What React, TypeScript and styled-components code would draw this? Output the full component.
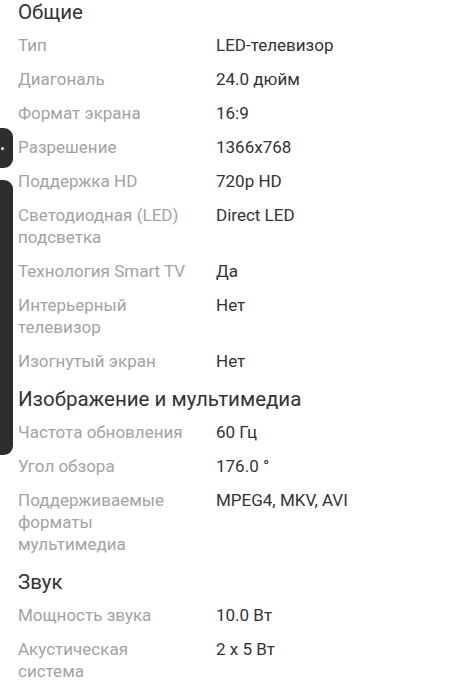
import React from "react";
import styled, { createGlobalStyle } from "styled-components";

const Global = createGlobalStyle`
  html, body { margin: 0; padding: 0; background: #ffffff; }
  body { font-family: Roboto, "Noto Sans", "Liberation Sans", sans-serif; -webkit-font-smoothing: antialiased; }
`;

const Page = styled.div`
  position: relative;
  width: 452px;
  min-height: 699px;
  padding: 0 18px;
  box-sizing: border-box;
  overflow: hidden;
`;

const Section = styled.section`
  display: flex;
  flex-direction: column;
`;

const Heading = styled.h2`
  margin: 3px 0 10px;
  font-size: 20.5px;
  line-height: 24px;
  font-weight: 400;
  color: #333333;
  section:first-child > & {
    margin-top: 0;
  }
`;

const Row = styled.div`
  display: grid;
  grid-template-columns: 172px 1fr;
  column-gap: 26px;
  margin-bottom: 12px;
  font-size: 17px;
  line-height: 22px;
`;

const Label = styled.div`
  color: #a3a3a3;
`;

const Value = styled.div`
  color: #333333;
`;

const EdgeTab = styled.div<{ $top: number; $height: number }>`
  position: absolute;
  left: 0;
  top: ${(p) => p.$top}px;
  width: 13px;
  height: ${(p) => p.$height}px;
  background: #2e2e2e;
  border-radius: 0 9px 9px 0;
`;

const Dot = styled.span`
  position: absolute;
  left: 1px;
  top: 50%;
  width: 3px;
  height: 3px;
  margin-top: -1px;
  border-radius: 50%;
  background: #ffffff;
`;

type Spec = [string, string];

const sections: { title: string; rows: Spec[] }[] = [
  {
    title: "Общие",
    rows: [
      ["Тип", "LED-телевизор"],
      ["Диагональ", "24.0 дюйм"],
      ["Формат экрана", "16:9"],
      ["Разрешение", "1366x768"],
      ["Поддержка HD", "720p HD"],
      ["Светодиодная (LED) подсветка", "Direct LED"],
      ["Технология Smart TV", "Да"],
      ["Интерьерный телевизор", "Нет"],
      ["Изогнутый экран", "Нет"],
    ],
  },
  {
    title: "Изображение и мультимедиа",
    rows: [
      ["Частота обновления", "60 Гц"],
      ["Угол обзора", "176.0 °"],
      ["Поддерживаемые форматы мультимедиа", "MPEG4, MKV, AVI"],
    ],
  },
  {
    title: "Звук",
    rows: [
      ["Мощность звука", "10.0 Вт"],
      ["Акустическая система", "2 x 5 Вт"],
    ],
  },
];

export default function App() {
  return (
    <>
      <Global />
      <Page>
        {sections.map((s) => (
          <Section key={s.title}>
            <Heading>{s.title}</Heading>
            {s.rows.map(([l, v]) => (
              <Row key={l}>
                <Label>{l}</Label>
                <Value>{v}</Value>
              </Row>
            ))}
          </Section>
        ))}
        <EdgeTab $top={128} $height={40}>
          <Dot />
        </EdgeTab>
        <EdgeTab $top={180} $height={275} />
      </Page>
    </>
  );
}
